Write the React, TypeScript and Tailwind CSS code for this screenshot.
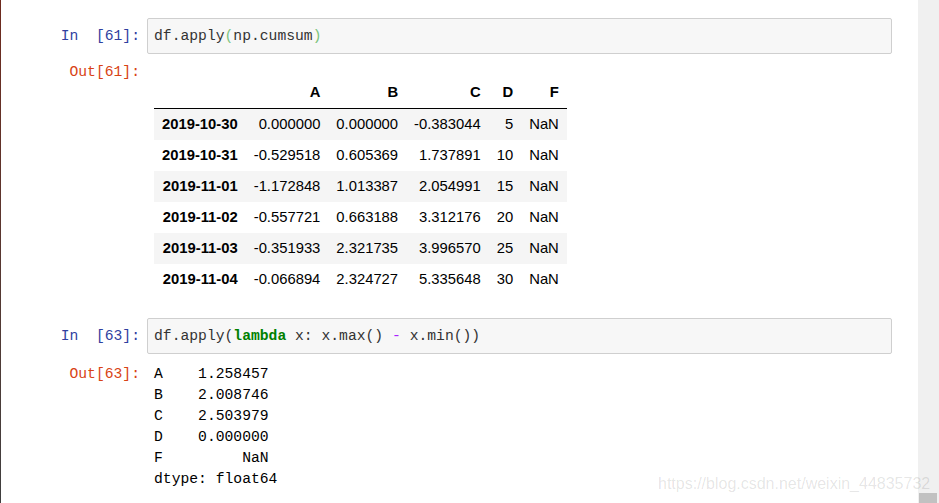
import React from "react";

const mono = "font-['Liberation_Mono',monospace] text-[14.7px]";

const rows = [
  ["2019-10-30", "0.000000", "0.000000", "-0.383044", "5", "NaN"],
  ["2019-10-31", "-0.529518", "0.605369", "1.737891", "10", "NaN"],
  ["2019-11-01", "-1.172848", "1.013387", "2.054991", "15", "NaN"],
  ["2019-11-02", "-0.557721", "0.663188", "3.312176", "20", "NaN"],
  ["2019-11-03", "-0.351933", "2.321735", "3.996570", "25", "NaN"],
  ["2019-11-04", "-0.066894", "2.324727", "5.335648", "30", "NaN"],
];

const series = [
  "A    1.258457",
  "B    2.008746",
  "C    2.503979",
  "D    0.000000",
  "F         NaN",
  "dtype: float64",
];

function InPrompt({ n }: { n: number }) {
  return (
    <div className={`${mono} w-[146px] shrink-0 pr-[7px] text-right whitespace-pre text-[#303f9f] flex items-center justify-end`}>
      {`In  [${n}]:`}
    </div>
  );
}

function OutPrompt({ n }: { n: number }) {
  return (
    <div className={`${mono} w-[146px] shrink-0 pr-[7px] text-right leading-[21px] text-[#d84315]`}>
      {`Out[${n}]:`}
    </div>
  );
}

function CodeBox({ children }: { children: React.ReactNode }) {
  return (
    <div className={`${mono} flex-1 h-[36px] border border-[#cfcfcf] bg-[#f7f7f7] rounded-[2px] pl-[6px] flex items-center whitespace-pre text-[#333]`}>
      {children}
    </div>
  );
}

export default function App() {
  return (
    <div className="relative flex h-[503px] w-[939px] overflow-hidden bg-white">
      <div className="w-px shrink-0 bg-gradient-to-b from-[#6e2a1e] to-[#3f3f3f]" />

      <div className="flex-1 pt-[18px] pr-[26px]">
        {/* cell 61 */}
        <div className="flex">
          <InPrompt n={61} />
          <CodeBox>
            df.apply<span className="text-[#7cc47c]">(</span>np.cumsum<span className="text-[#7cc47c]">)</span>
          </CodeBox>
        </div>
        <div className="mt-[8px] flex">
          <OutPrompt n={61} />
          <div className="pl-[7px]">
            <table className="mt-[15px] border-collapse font-['Liberation_Sans',Arial,sans-serif] text-[14.8px] text-black">
              <thead>
                <tr className="border-b border-black">
                  <th className="px-[8px] pb-[1px] leading-[30px]" />
                  {["A", "B", "C", "D", "F"].map((h) => (
                    <th key={h} className="px-[8px] pb-[1px] leading-[30px] text-right font-bold">
                      {h}
                    </th>
                  ))}
                </tr>
              </thead>
              <tbody>
                {rows.map((r, i) => (
                  <tr key={r[0]} className={i % 2 === 0 ? "bg-[#f5f5f5]" : ""}>
                    <th className="px-[8px] py-0 leading-[31px] text-right font-bold whitespace-nowrap">{r[0]}</th>
                    {r.slice(1).map((c, j) => (
                      <td key={j} className="px-[8px] py-0 leading-[31px] text-right whitespace-nowrap">
                        {c}
                      </td>
                    ))}
                  </tr>
                ))}
              </tbody>
            </table>
          </div>
        </div>

        {/* cell 63 */}
        <div className="mt-[23px] flex">
          <InPrompt n={63} />
          <CodeBox>
            df.apply(<span className="font-bold text-[#008000]">lambda</span> x: x.max() <span className="text-[#aa22ff]">-</span> x.min())
          </CodeBox>
        </div>
        <div className="mt-[10px] flex">
          <OutPrompt n={63} />
          <div className={`${mono} pl-[7px] leading-[21px] whitespace-pre text-black`}>
            {series.map((l) => (
              <div key={l}>{l}</div>
            ))}
          </div>
        </div>
      </div>

      <div className="flex w-[21px] shrink-0 flex-col justify-end bg-[#f0f0f0] pl-px pr-[2px]">
        <div className="h-[10px] bg-[#c1c1c1]" />
      </div>

      <div className="pointer-events-none absolute left-[658px] top-[476px] font-['Liberation_Sans',Arial,sans-serif] text-[16px] leading-none text-black/[0.11]">
        https://blog.csdn.net/weixin_44835732
      </div>
    </div>
  );
}
